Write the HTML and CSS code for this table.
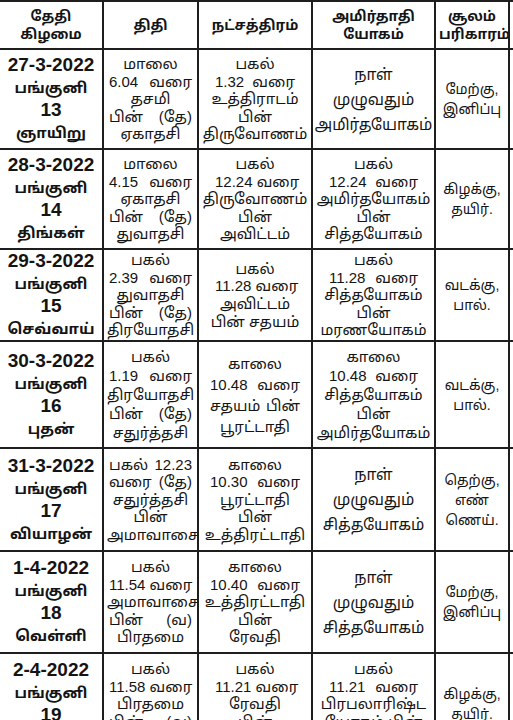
FILE: index.html
```html
<!DOCTYPE html>
<html lang="ta">
<head>
<meta charset="utf-8">
<title>பஞ்சாங்கம்</title>
<link rel="stylesheet" href="styles.css">
</head>
<body>
<table class="panchang">
  <colgroup>
    <col class="c-date"><col class="c-thithi"><col class="c-star"><col class="c-yoga"><col class="c-soolam"><col class="c-extra">
  </colgroup>
  <thead>
    <tr class="head">
      <th>தேதி<br>கிழமை</th>
      <th>திதி</th>
      <th>நட்சத்திரம்</th>
      <th>அமிர்தாதி<br>யோகம்</th>
      <th>சூலம்<br>பரிகாரம்</th>
      <th class="extra"></th>
    </tr>
  </thead>
  <tbody>
    <tr class="r1">
      <td class="date">27-3-2022<br><span class="tw">பங்குனி</span><br>13<br><span class="tw">ஞாயிறு</span></td>
      <td>மாலை<br><span class="j">6.04 வரை</span>தசமி<br><span class="j">பின் (தே)</span>ஏகாதசி</td>
      <td>பகல்<br><span class="j in">1.32 வரை</span>உத்திராடம்<br>பின்<br>திருவோணம்</td>
      <td class="big">நாள்<br>முழுவதும்<br>அமிர்தயோகம்</td>
      <td class="soolam">மேற்கு,<br>இனிப்பு</td>
      <td class="extra"></td>
    </tr>
    <tr class="r2">
      <td class="date">28-3-2022<br><span class="tw">பங்குனி</span><br>14<br><span class="tw">திங்கள்</span></td>
      <td>மாலை<br><span class="j">4.15 வரை</span>ஏகாதசி<br><span class="j">பின் (தே)</span>துவாதசி</td>
      <td>பகல்<br><span class="j in">12.24 வரை</span>திருவோணம்<br>பின்<br>அவிட்டம்</td>
      <td>பகல்<br><span class="j in">12.24 வரை</span>அமிர்தயோகம்<br>பின்<br>சித்தயோகம்</td>
      <td class="soolam">கிழக்கு,<br>தயிர்.</td>
      <td class="extra"></td>
    </tr>
    <tr class="r3">
      <td class="date">29-3-2022<br><span class="tw">பங்குனி</span><br>15<br><span class="tw">செவ்வாய்</span></td>
      <td>பகல்<br><span class="j">2.39 வரை</span>துவாதசி<br><span class="j">பின் (தே)</span>திரயோதசி</td>
      <td>பகல்<br><span class="j in">11.28 வரை</span>அவிட்டம்<br>பின் சதயம்</td>
      <td>பகல்<br><span class="j in">11.28 வரை</span>சித்தயோகம்<br>பின்<br>மரணயோகம்</td>
      <td class="soolam">வடக்கு,<br>பால்.</td>
      <td class="extra"></td>
    </tr>
    <tr class="r4">
      <td class="date">30-3-2022<br><span class="tw">பங்குனி</span><br>16<br><span class="tw">புதன்</span></td>
      <td class="loose">பகல்<br><span class="j">1.19 வரை</span>திரயோதசி<br><span class="j">பின் (தே)</span>சதுர்த்தசி</td>
      <td class="wide">காலை<br><span class="j mid">10.48 வரை</span><span class="j mid">சதயம் பின்</span>பூரட்டாதி</td>
      <td class="loose">காலை<br><span class="j in">10.48 வரை</span>சித்தயோகம்<br>பின்<br>அமிர்தயோகம்</td>
      <td class="soolam">வடக்கு,<br>பால்.</td>
      <td class="extra"></td>
    </tr>
    <tr class="r5">
      <td class="date">31-3-2022<br><span class="tw">பங்குனி</span><br>17<br><span class="tw">வியாழன்</span></td>
      <td><span class="j">பகல் 12.23</span><span class="j">வரை (தே)</span>சதுர்த்தசி<br>பின்<br>அமாவாசை</td>
      <td>காலை<br><span class="j mid">10.30 வரை</span>பூரட்டாதி<br>பின்<br>உத்திரட்டாதி</td>
      <td class="big">நாள்<br>முழுவதும்<br>சித்தயோகம்</td>
      <td class="soolam">தெற்கு,<br>எண்<br>ணெய்.</td>
      <td class="extra"></td>
    </tr>
    <tr class="r6">
      <td class="date">1-4-2022<br><span class="tw">பங்குனி</span><br>18<br><span class="tw">வெள்ளி</span></td>
      <td>பகல்<br><span class="j">11.54 வரை</span>அமாவாசை<br><span class="j">பின் (வ)</span>பிரதமை</td>
      <td>காலை<br><span class="j mid">10.40 வரை</span>உத்திரட்டாதி<br>பின்<br>ரேவதி</td>
      <td class="big">நாள்<br>முழுவதும்<br>சித்தயோகம்</td>
      <td class="soolam">மேற்கு,<br>இனிப்பு</td>
      <td class="extra"></td>
    </tr>
    <tr class="r7">
      <td class="date">2-4-2022<br><span class="tw">பங்குனி</span><br>19<br><span class="tw">சனி</span></td>
      <td>பகல்<br><span class="j">11.58 வரை</span>பிரதமை<br><span class="j">பின் (வ)</span>துவிதியை</td>
      <td>பகல்<br><span class="j in">11.21 வரை</span>ரேவதி<br>பின்<br>அசுவினி</td>
      <td>பகல்<br><span class="j in">11.21 வரை</span>பிரபலாரிஷ்ட<br>யோகம் பின்<br>சித்தயோகம்</td>
      <td class="soolam">கிழக்கு,<br>தயிர்.</td>
      <td class="extra"></td>
    </tr>
  </tbody>
</table>
</body>
</html>
```
FILE: styles.css
```css
html, body {
  margin: 0;
  padding: 0;
  background: #ffffff;
  overflow: hidden;
  height: 720px;
}

.panchang {
  border-collapse: collapse;
  table-layout: fixed;
  width: 594px;
  margin-left: -2px;
  margin-top: 0;
  color: #141414;
  font-family: "Liberation Sans", "Noto Sans Tamil", "Lohit Tamil", "Noto Sans", sans-serif;
}

.c-date { width: 104px; }
.c-thithi { width: 95px; }
.c-star { width: 114px; }
.c-yoga { width: 123px; }
.c-soolam { width: 74px; }
.c-extra { width: 84px; }

.panchang th,
.panchang td {
  border: 2px solid #1e1e1e;
  padding: 0 3px;
  text-align: center;
  vertical-align: middle;
  font-size: 15px;
  line-height: 17.6px;
  overflow: hidden;
}

.panchang th {
  font-weight: bold;
  font-size: 14px;
  line-height: 18px;
}

.head { height: 48px; }
.r1 { height: 100px; }
.r2 { height: 100px; }
.r3 { height: 90px; }
.r4 { height: 107px; }
.r5 { height: 103px; }
.r6 { height: 102px; }
.r7 { height: 102px; }

.panchang td.date {
  font-weight: bold;
  font-size: 19px;
  line-height: 22px;
}

.tw {
  font-size: 15px;
}

.j {
  display: block;
  white-space: nowrap;
  text-align: justify;
  text-align-last: justify;
  padding: 0 2px;
}

.j.mid {
  padding: 0 8px;
}

.j.in {
  padding: 0 13px;
}

.panchang td.big {
  font-size: 15.5px;
  line-height: 25px;
  padding: 0 1px;
  white-space: nowrap;
}

.panchang td.soolam {
  font-size: 14px;
  line-height: 20px;
}

.panchang td.loose {
  line-height: 19px;
}

.panchang td.wide {
  line-height: 21px;
}
```
